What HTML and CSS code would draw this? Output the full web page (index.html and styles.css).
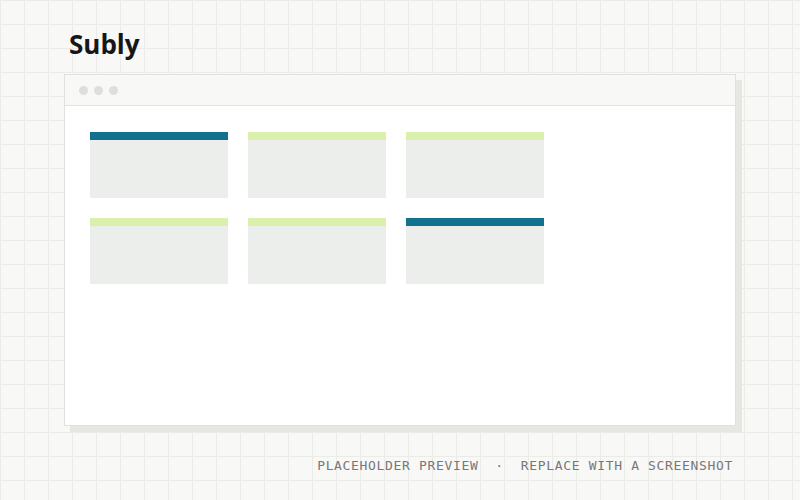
FILE: index.html
```html
<!DOCTYPE html>
<html lang="en">
<head>
<meta charset="utf-8">
<title>Subly</title>
<link rel="stylesheet" href="styles.css">
</head>
<body>
<div class="page">
  <h1 class="title">Subly</h1>
  <div class="window">
    <div class="titlebar">
      <span class="dot"></span><span class="dot"></span><span class="dot"></span>
    </div>
    <div class="content">
      <div class="card card-teal"><div class="card-bar"></div><div class="card-body"></div></div>
      <div class="card card-lime"><div class="card-bar"></div><div class="card-body"></div></div>
      <div class="card card-lime"><div class="card-bar"></div><div class="card-body"></div></div>
      <div class="card card-lime"><div class="card-bar"></div><div class="card-body"></div></div>
      <div class="card card-lime"><div class="card-bar"></div><div class="card-body"></div></div>
      <div class="card card-teal"><div class="card-bar"></div><div class="card-body"></div></div>
    </div>
  </div>
  <div class="footer">PLACEHOLDER PREVIEW &nbsp;·&nbsp; REPLACE WITH A SCREENSHOT</div>
</div>
</body>
</html>
```

FILE: styles.css
```css
html, body {
  margin: 0;
  padding: 0;
}
body {
  width: 800px;
  height: 500px;
  overflow: hidden;
  background-color: #f8f8f6;
  background-image:
    linear-gradient(to right, #ebebe8 1px, transparent 1px),
    linear-gradient(to bottom, #ebebe8 1px, transparent 1px);
  background-size: 24px 24px;
  font-family: "Open Sans", "Noto Sans", sans-serif;
}
.page {
  padding: 28px 0 0 64px;
  width: 674px;
}
.title {
  margin: 0 0 14px 5px;
  font-size: 26px;
  line-height: 32px;
  font-weight: 700;
  color: #16161a;
}
.window {
  width: 670px;
  height: 350px;
  background: #ffffff;
  border: 1px solid #e0e0dd;
  box-shadow: 6px 6px 0 #e6e6e3;
  display: flex;
  flex-direction: column;
}
.titlebar {
  height: 30px;
  background: #f8f8f6;
  border-bottom: 1px solid #e2e2df;
  display: flex;
  align-items: center;
  gap: 6px;
  padding-left: 14px;
}
.dot {
  width: 9px;
  height: 9px;
  border-radius: 50%;
  background: #dededc;
}
.content {
  padding: 26px 0 0 25px;
  display: grid;
  grid-template-columns: repeat(3, 138px);
  grid-auto-rows: 66px;
  column-gap: 20px;
  row-gap: 20px;
}
.card {
  display: flex;
  flex-direction: column;
}
.card-bar {
  height: 8px;
}
.card-teal .card-bar {
  background: #12728d;
}
.card-lime .card-bar {
  background: #dcf0ae;
}
.card-body {
  flex: 1;
  background: #eceeec;
}
.footer {
  margin-top: 32px;
  padding-right: 5px;
  text-align: right;
  font-family: "DejaVu Sans Mono", "Liberation Mono", monospace;
  font-size: 13px;
  line-height: 16px;
  letter-spacing: 0.66px;
  color: #77777a;
  white-space: pre;
}
```
